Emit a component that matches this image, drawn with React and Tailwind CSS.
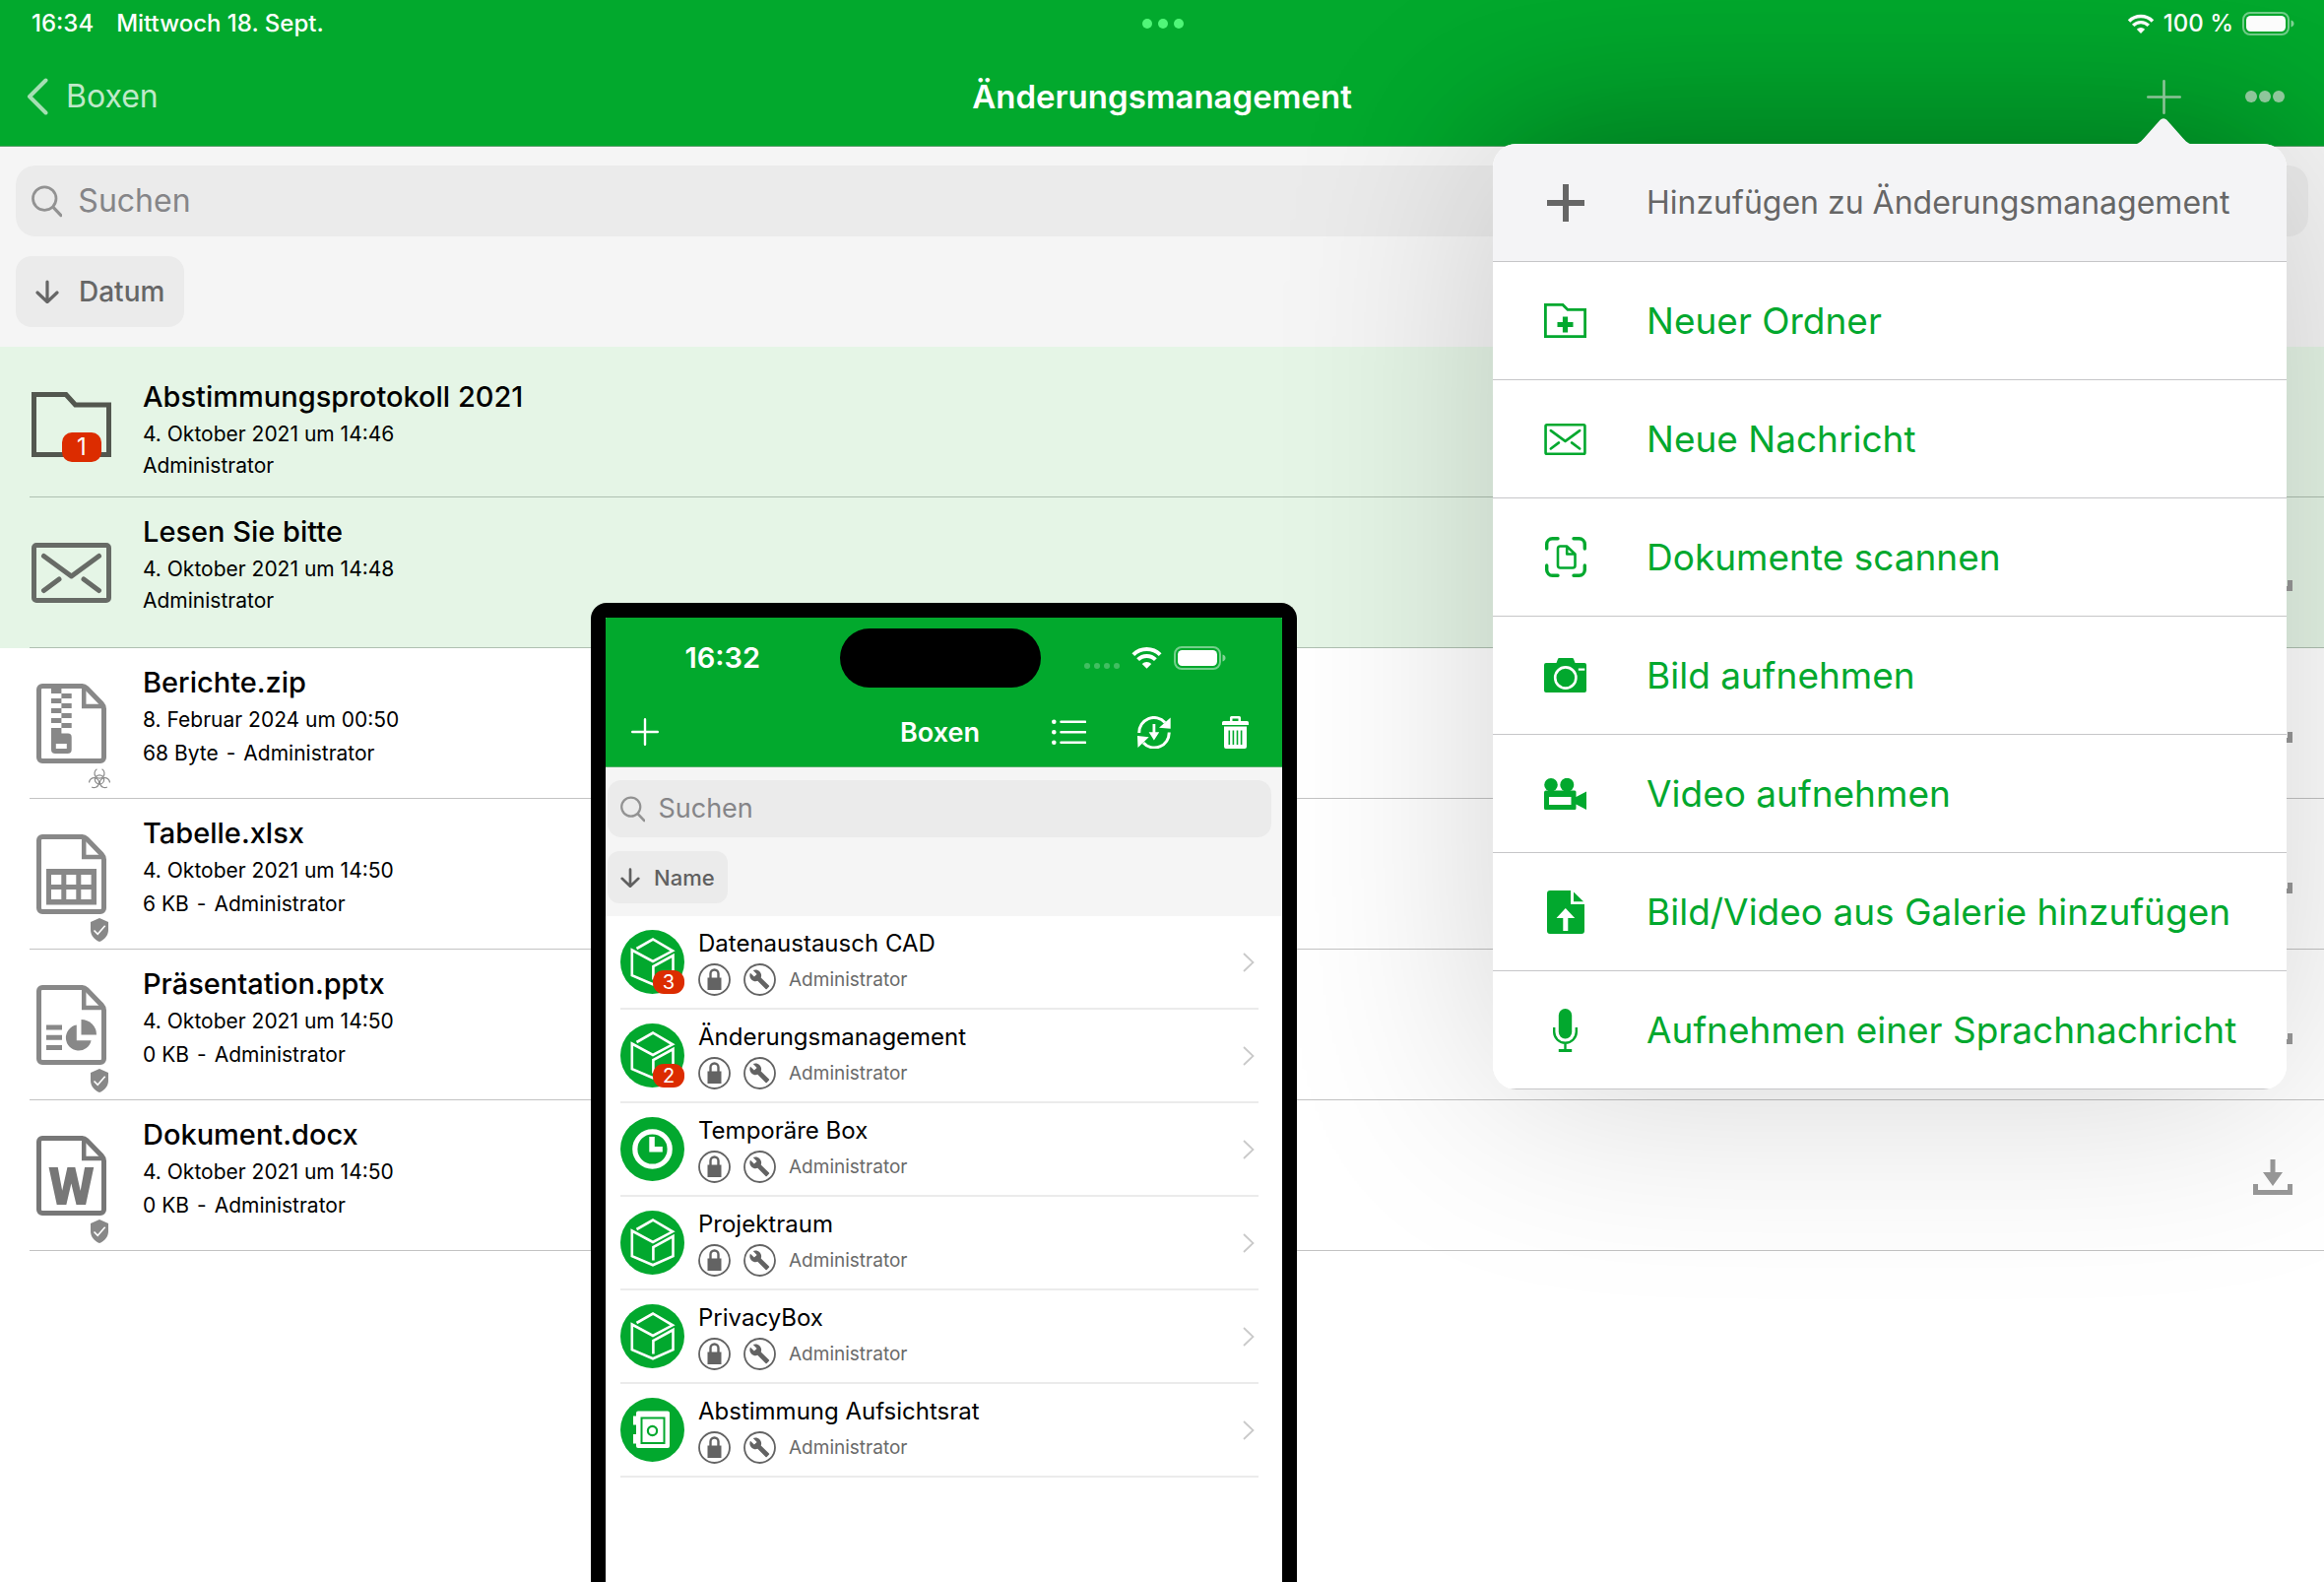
import React from "react";

/* ---------- status bar glyphs ---------- */

function Wifi({ className }) {
  return (
    <svg viewBox="0 0 30 22" className={className} fill="none" stroke="currentColor" strokeWidth="3.8" aria-hidden="true">
      <path d="M1.8 8.2A18.6 18.6 0 0 1 28.2 8.2" />
      <path d="M6.4 13.1A12 12 0 0 1 23.6 13.1" />
      <path d="M15 22L10.4 17.2A6.6 6.6 0 0 1 19.6 17.2Z" fill="currentColor" stroke="none" />
    </svg>
  );
}

function Battery({ className }) {
  return (
    <svg viewBox="0 0 53 24" className={className} aria-hidden="true">
      <rect x="1" y="1" width="46" height="22" rx="7" fill="none" stroke="currentColor" strokeOpacity="0.45" strokeWidth="2" />
      <rect x="4" y="4" width="40" height="16" rx="4.5" fill="currentColor" />
      <path d="M49.5 8.5c2 .6 3 1.9 3 3.5s-1 2.9-3 3.5z" fill="currentColor" fillOpacity="0.5" />
    </svg>
  );
}

/* ---------- shared glyphs ---------- */

function SearchGlyph({ className }) {
  return (
    <svg viewBox="0 0 32 33" className={className} fill="none" stroke="#929292" strokeWidth="2.8" strokeLinecap="round" aria-hidden="true">
      <circle cx="13.5" cy="13.5" r="12" />
      <path d="M22.5 22.5l8 8.5" strokeWidth="3.2" />
    </svg>
  );
}

function ArrowDown({ className }) {
  return (
    <svg viewBox="0 0 24 24" className={className} fill="none" stroke="currentColor" strokeWidth="3.2" strokeLinecap="round" strokeLinejoin="round" aria-hidden="true">
      <path d="M12 2v20M2 13l10 9.5L22 13" />
    </svg>
  );
}

function DownloadGlyph() {
  return (
    <svg viewBox="0 0 40 36" className="h-9 w-10" fill="#999999" aria-hidden="true">
      <path d="M17.5 0h5v13H30L20 27 10 13h7.5z" />
      <path d="M0 25h5v6h30v-6h5v11H0z" />
    </svg>
  );
}

function Envelope({ className, stroke, edge = 5 }) {
  return (
    <svg viewBox="0 0 81 61" className={className} fill="none" stroke={stroke} strokeWidth={edge} strokeLinecap="round" aria-hidden="true">
      <rect x="2.5" y="2.5" width="76" height="56" rx="2.5" />
      <path d="M12.5 13.5l28 20.5 28-20.5M12.5 48.5l15.5-11.5M68.5 48.5L53 37" strokeLinejoin="round" />
    </svg>
  );
}

/* ---------- file list glyphs ---------- */

function FolderIcon() {
  return (
    <div className="relative mt-3.5 ml-0.5 h-[66px] w-[81px]">
      <svg viewBox="0 0 81 66" className="h-[66px] w-[81px]" fill="none" stroke="#53574f" strokeWidth="5" aria-hidden="true">
        <path d="M2.5 2.5h32.5l9.5 10.5h34v50.5h-76z" />
      </svg>
      <span className="absolute -bottom-[5px] left-[31px] flex h-[30px] w-10 items-center justify-center rounded-[10px] bg-[#dc2c00] text-[24px] leading-none text-white">
        1
      </span>
    </div>
  );
}

function Sheet({ color, children }) {
  return (
    <svg viewBox="0 0 71 81" className="mt-5 ml-[7px] h-[81px] w-[71px] overflow-visible" aria-hidden="true">
      <path
        d="M6 2.5h40.5c2 0 3 .6 4.5 2L66 20c1.8 2 2.5 3.5 2.5 5.5V75a3.5 3.5 0 0 1-3.5 3.5H6A3.5 3.5 0 0 1 2.5 75V6A3.5 3.5 0 0 1 6 2.5z"
        fill="none"
        stroke={color}
        strokeWidth="5"
      />
      <path d="M48.2 3v20H69" fill="none" stroke={color} strokeWidth="4.5" />
      {children(color)}
    </svg>
  );
}

function ZipIcon() {
  return (
    <Sheet color="#888888">
      {(c) => (
        <g fill={c}>
          <path d="M15 2h10.4v8H15zM15 15h10.4v5H15zM15 25h10.4v5H15zM15 35h10.4v5H15zM25.4 10h10.3v5H25.4zM25.4 20h10.3v5H25.4zM25.4 30h10.3v5H25.4zM25.4 40h10.3v5H25.4z" />
          <path fillRule="evenodd" d="M15 45h10.4v5.5H32a3.7 3.7 0 0 1 3.7 3.7V67a4 4 0 0 1-4 4H19a4 4 0 0 1-4-4zM19.8 61v5h11v-5z" />
        </g>
      )}
    </Sheet>
  );
}

function TableIcon() {
  return (
    <Sheet color="#888888">
      {(c) => (
        <path
          fill={c}
          fillRule="evenodd"
          d="M10 35h51v36.5H10zM15 41v10h10.3V41zM30.3 41v10h10V41zM45.3 41v10h10.3V41zM15 56v10h10.3V56zM30.3 56v10h10V56zM45.3 56v10h10.3V56z"
        />
      )}
    </Sheet>
  );
}

function SlidesIcon() {
  return (
    <Sheet color="#888888">
      {(c) => (
        <g fill={c}>
          <path d="M10 40.5h16v5H10zM10 50.7h16v5H10zM10 61h16v5H10z" />
          <path d="M40.8 40.6A13 13 0 1 0 55.6 56.2H40.8z" />
          <path d="M45.5 35A15.5 15.5 0 0 1 61 50.6H45.5z" />
        </g>
      )}
    </Sheet>
  );
}

function WordIcon() {
  return (
    <Sheet color="#777777">
      {(c) => (
        <text x="35.5" y="70" textAnchor="middle" fill={c} className="font-[Roboto,sans-serif] text-[54px] font-black">
          W
        </text>
      )}
    </Sheet>
  );
}

function Shield() {
  return (
    <svg viewBox="0 0 18 24" className="mt-1 h-6 w-[18px] self-end" aria-hidden="true">
      <path d="M9 0l9 4v8c0 5.5-3.8 10-9 12-5.2-2-9-6.5-9-12V4z" fill="#888888" />
      <path d="M3.5 12.5l3.7 3.8 7.5-8.5" fill="none" stroke="#fff" strokeWidth="1.6" />
    </svg>
  );
}

function Biohazard() {
  return (
    <svg viewBox="0 0 22 22" className="mt-1 -mr-0.5 size-[22px] self-end" fill="none" stroke="#8a8a8a" strokeWidth="1.2" aria-hidden="true">
      <path d="M8.4 1.8A5 5 0 1 0 13.6 1.8" />
      <path d="M8.4 1.8A5 5 0 1 0 13.6 1.8" transform="rotate(120 11 12.4)" />
      <path d="M8.4 1.8A5 5 0 1 0 13.6 1.8" transform="rotate(240 11 12.4)" />
      <circle cx="11" cy="12.4" r="4.6" />
    </svg>
  );
}

const files = [
  { name: "Lesen Sie bitte", date: "4. Oktober 2021 um 14:48", owner: "Administrator", icon: <Envelope className="mt-[30px] ml-0.5 h-[61px] w-[81px]" stroke="#676b66" />, unread: true },
  { name: "Berichte.zip", date: "8. Februar 2024 um 00:50", size: "68 Byte", owner: "Administrator", icon: <ZipIcon />, state: <Biohazard /> },
  { name: "Tabelle.xlsx", date: "4. Oktober 2021 um 14:50", size: "6 KB", owner: "Administrator", icon: <TableIcon />, state: <Shield /> },
  { name: "Präsentation.pptx", date: "4. Oktober 2021 um 14:50", size: "0 KB", owner: "Administrator", icon: <SlidesIcon />, state: <Shield /> },
  { name: "Dokument.docx", date: "4. Oktober 2021 um 14:50", size: "0 KB", owner: "Administrator", icon: <WordIcon />, state: <Shield /> },
];

function FileText({ name, date, size, owner }) {
  return (
    <div className="flex-1">
      <h2 className="text-[29px] leading-[38px] font-medium">{name}</h2>
      <div className={size ? "mt-[3px] flex flex-col gap-0.5" : "mt-[3px] flex flex-col"}>
        <p className="text-[21px] leading-8">{date}</p>
        <p className="flex gap-2 text-[21px] leading-8">
          {size && (
            <>
              <span>{size}</span>
              <span>-</span>
            </>
          )}
          <span>{owner}</span>
        </p>
      </div>
    </div>
  );
}

function FileList() {
  return (
    <ul>
      <li className="bg-[#e5f5e6] pl-[30px]">
        <div className="flex border-b border-[#afc0b1] pt-8 pb-[15px]">
          <div className="w-[115px]">
            <FolderIcon />
          </div>
          <FileText name="Abstimmungsprotokoll 2021" date="4. Oktober 2021 um 14:46" owner="Administrator" />
        </div>
      </li>
      {files.map((f) => (
        <li key={f.name} className={f.unread ? "bg-[#e5f5e6] pl-[30px]" : "pl-[30px]"}>
          <div className={f.unread ? "flex border-b border-[#afc0b1] pt-4 pb-[31px]" : "flex border-b border-[#c3c3c3] pt-4 pb-[29px]"}>
            <div className="h-0 w-[115px]">
              <div className="flex w-20 flex-col">
                {f.icon}
                {f.state}
              </div>
            </div>
            <FileText name={f.name} date={f.date} size={f.size} owner={f.owner} />
            <button type="button" aria-label={`${f.name} herunterladen`} className="mt-4 mr-8 self-center">
              <DownloadGlyph />
            </button>
          </div>
        </li>
      ))}
    </ul>
  );
}

/* ---------- popover ---------- */

const menu = [
  {
    label: "Neuer Ordner",
    icon: (
      <svg viewBox="0 0 43 35" className="h-[35px] w-[43px]" fill="none" stroke="currentColor" strokeWidth="2.8" aria-hidden="true">
        <path d="M1.4 1.4h17.6l5 5h17.6v27.2H1.4z" />
        <path d="M21.5 13.5v16M13.5 21.5h16" strokeWidth="5.2" />
      </svg>
    ),
  },
  { label: "Neue Nachricht", icon: <Envelope className="h-8 w-[43px]" stroke="currentColor" edge={5} /> },
  {
    label: "Dokumente scannen",
    icon: (
      <svg viewBox="0 0 42 41" className="h-[41px] w-[42px]" fill="none" stroke="currentColor" strokeWidth="3.4" strokeLinecap="round" strokeLinejoin="round" aria-hidden="true">
        <path d="M1.7 12V7.5a5.8 5.8 0 0 1 5.8-5.8H13M29 1.7h5.5a5.8 5.8 0 0 1 5.8 5.8V12M40.3 29v4.5a5.8 5.8 0 0 1-5.8 5.8H29M13 39.3H7.5a5.8 5.8 0 0 1-5.8-5.8V29" />
        <path d="M22 9.5h-6.5a2.5 2.5 0 0 0-2.5 2.5v17a2.5 2.5 0 0 0 2.5 2.5h12.5a2.5 2.5 0 0 0 2.5-2.5V17.5zM22.2 10v7.5h8" strokeWidth="2.6" />
      </svg>
    ),
  },
  {
    label: "Bild aufnehmen",
    icon: (
      <svg viewBox="0 0 43 35" className="h-[35px] w-[43px]" fill="currentColor" aria-hidden="true">
        <path d="M2 5h10.5l1.5-4a1.5 1.5 0 0 1 1.5-1h13a1.5 1.5 0 0 1 1.5 1l1.5 4H41a2 2 0 0 1 2 2v26a2 2 0 0 1-2 2H2a2 2 0 0 1-2-2V7a2 2 0 0 1 2-2z" />
        <circle cx="21.8" cy="20" r="10.6" stroke="#fff" strokeWidth="2.6" />
        <path d="M34.8 10.5h6.5v2.2h-6.5z" fill="#fff" />
      </svg>
    ),
  },
  {
    label: "Video aufnehmen",
    icon: (
      <svg viewBox="0 0 43 32" className="h-8 w-[43px]" fill="currentColor" aria-hidden="true">
        <circle cx="7" cy="6.8" r="6.8" />
        <circle cx="23.3" cy="6.8" r="7" />
        <path fillRule="evenodd" d="M2 12.5h29a1.5 1.5 0 0 1 1.5 1.5v5L43 13.5V32l-10.5-5.5V30.5A1.5 1.5 0 0 1 31 32H1.5A1.5 1.5 0 0 1 0 30.5V14.5a2 2 0 0 1 2-2zM5 19v8h22.5v-8z" />
      </svg>
    ),
  },
  {
    label: "Bild/Video aus Galerie hinzufügen",
    icon: (
      <svg viewBox="0 0 38 44" className="h-11 w-[38px]" fill="currentColor" aria-hidden="true">
        <path d="M3 0h21v14h14v27a3 3 0 0 1-3 3H3a3 3 0 0 1-3-3V3a3 3 0 0 1 3-3z" />
        <path d="M27 1.5l10 9.7H27z" />
        <path d="M18.8 18l9.4 10h-6.9v13h-5V28H9.5z" fill="#fff" />
      </svg>
    ),
  },
  {
    label: "Aufnehmen einer Sprachnachricht",
    icon: (
      <svg viewBox="0 0 25 44" className="h-11 w-[25px]" fill="none" stroke="currentColor" strokeWidth="2.4" aria-hidden="true">
        <rect x="5.8" y="0" width="13.4" height="30.5" rx="6.7" fill="currentColor" stroke="none" />
        <path d="M1.2 19v4.5a11.3 11.3 0 0 0 22.6 0V19M12.5 34.5V42" />
        <path d="M5.8 42.5h13.4" strokeWidth="3" />
      </svg>
    ),
  },
];

function Popover() {
  return (
    <div role="menu" aria-label="Hinzufügen" className="absolute top-[146px] right-[38px] z-10 w-[806px] rounded-3xl shadow-[0_0_220px_rgba(0,0,0,0.18)]">
      <svg viewBox="0 0 68 27" className="absolute -top-[26px] right-[91px] h-[27px] w-[68px]" fill="#f4f4f6" aria-hidden="true">
        <path d="M0 27c7 0 10-2 14-6.5L29.5 3c3-3.7 6-3.7 9 0L54 20.5C58 25 61 27 68 27z" />
      </svg>
      <div className="overflow-hidden rounded-3xl bg-white">
        <div className="flex h-[120px] items-center border-b border-[#c6c6c8] bg-[#f4f4f6] pl-[52px]">
          <span className="flex w-[43px] justify-center">
            <svg viewBox="0 0 38 38" className="size-[38px]" stroke="#666666" strokeWidth="6" aria-hidden="true">
              <path d="M19 0v38M0 19h38" />
            </svg>
          </span>
          <span className="ml-[61px] text-[32px] leading-none whitespace-nowrap text-[#666666]">Hinzufügen zu Änderungsmanagement</span>
        </div>
        {menu.map((m) => (
          <button key={m.label} type="button" role="menuitem" className="flex h-[120px] w-full items-center border-b border-[#c6c6c8] pl-[52px] text-[#02a82e]">
            <span className="flex w-[43px] justify-center">{m.icon}</span>
            <span className="ml-[61px] text-[37px] leading-none whitespace-nowrap">{m.label}</span>
          </button>
        ))}
      </div>
    </div>
  );
}

/* ---------- phone ---------- */

function CubeGlyph() {
  return (
    <path
      d="M16.5 19L33 9.5l20 11.8L33 32 11.8 20.5v25.7L33 55.3l20.5-9.1V26L33.4 37v13.5"
      fill="none"
      stroke="#fff"
      strokeWidth="2.6"
    />
  );
}

function ClockGlyph() {
  return (
    <g>
      <circle cx="32.5" cy="32.5" r="17.7" fill="none" stroke="#fff" strokeWidth="5.2" />
      <path d="M29.3 20h5.5v10h8v5.5H29.3z" fill="#fff" />
    </g>
  );
}

function SafeGlyph() {
  return (
    <g>
      <path d="M18 13.5h30a2 2 0 0 1 2 2V49a2 2 0 0 1-2 2H18a2 2 0 0 1-2-2v-2.5h-3V37h3V27.5h-3v-9h3v-3a2 2 0 0 1 2-2z" fill="#fff" />
      <path d="M21.5 20.5h23V46h-23z" fill="none" stroke="#02a82e" strokeWidth="2" />
      <circle cx="32.5" cy="33.5" r="4.6" fill="none" stroke="#02a82e" strokeWidth="2.2" />
    </g>
  );
}

function LockBadge() {
  return (
    <svg viewBox="0 0 33 33" className="size-[33px]" fill="none" stroke="#636363" aria-hidden="true">
      <circle cx="16.5" cy="16.5" r="15.5" strokeWidth="1.8" />
      <path d="M12.5 15.5v-5a4 4 0 0 1 8 0v5" strokeWidth="2.4" />
      <path d="M9.5 14.5h14v12.5h-14z" fill="#636363" stroke="none" />
    </svg>
  );
}

function WrenchBadge() {
  return (
    <svg viewBox="0 0 33 33" className="size-[33px]" aria-hidden="true">
      <circle cx="16.5" cy="16.5" r="15.5" strokeWidth="1.8" fill="none" stroke="#636363" />
      <g transform="translate(5.5 5.5) scale(0.9 0.9)">
        <path
          fill="#636363"
          d="M22.7 19l-9.1-9.1c.9-2.3.4-5-1.5-6.9-2-2-5-2.4-7.4-1.3L9 6 6 9 1.6 4.7C.4 7.1.9 10.1 2.9 12.1c1.9 1.9 4.6 2.4 6.9 1.5l9.1 9.1c.4.4 1 .4 1.4 0l2.3-2.3c.5-.4.5-1.1.1-1.4z"
        />
      </g>
    </svg>
  );
}

const boxes = [
  { name: "Datenaustausch CAD", glyph: <CubeGlyph />, count: 3 },
  { name: "Änderungsmanagement", glyph: <CubeGlyph />, count: 2 },
  { name: "Temporäre Box", glyph: <ClockGlyph /> },
  { name: "Projektraum", glyph: <CubeGlyph /> },
  { name: "PrivacyBox", glyph: <CubeGlyph /> },
  { name: "Abstimmung Aufsichtsrat", glyph: <SafeGlyph /> },
];

function BoxRow({ name, glyph, count }) {
  return (
    <li className="flex items-center border-b-2 border-[#ebebeb] py-3">
      <div className="relative">
        <svg viewBox="0 0 65 65" className="size-[65px]" aria-hidden="true">
          <circle cx="32.5" cy="32.5" r="32.5" fill="#02a82e" />
          {glyph}
        </svg>
        {count && (
          <span className="absolute right-0 bottom-0 flex h-6 w-8 items-center justify-center rounded-[11px] bg-[#dc2c00] text-[20px] leading-none text-white">
            {count}
          </span>
        )}
      </div>
      <div className="ml-3.5 flex-1">
        <h3 className="text-[24px] leading-8">{name}</h3>
        <div className="mt-1 flex items-center gap-[13px]">
          <LockBadge />
          <WrenchBadge />
          <span className="text-[19px] leading-6 text-[#6a6a6a]">Administrator</span>
        </div>
      </div>
      <svg viewBox="0 0 12 20" className="mr-1 h-5 w-3" fill="none" stroke="#c9c9c9" strokeWidth="1.8" aria-hidden="true">
        <path d="M1 1l9.5 9L1 19" />
      </svg>
    </li>
  );
}

function Phone() {
  return (
    <section aria-label="Boxen" className="absolute top-[612px] bottom-0 left-[600px] z-20 w-[717px] overflow-hidden rounded-t-2xl border-x-[15px] border-t-[15px] border-black bg-white">
      <header className="border-b border-[#4fae66] bg-[#02a92d] pr-2 text-white">
        <div className="grid h-[81px] grid-cols-[1fr_204px_1fr] items-center">
          <span className="text-center text-[29px] leading-none font-semibold">16:32</span>
          <span className="h-[60px] rounded-full bg-black" />
          <span className="flex items-center justify-center pr-1">
            <span className="mt-4 flex gap-1">
              <i className="size-1.5 rounded-sm bg-white/25" />
              <i className="size-1.5 rounded-sm bg-white/25" />
              <i className="size-1.5 rounded-sm bg-white/25" />
              <i className="size-1.5 rounded-sm bg-white/25" />
            </span>
            <Wifi className="ml-3 h-[23px] w-[31px]" />
            <Battery className="ml-3 h-6 w-[53px]" />
          </span>
        </div>
        <div className="grid h-[70px] grid-cols-[1fr_auto_1fr] items-center px-[26px]">
          <button type="button" aria-label="Neue Box" className="justify-self-start">
            <svg viewBox="0 0 28 28" className="size-7" stroke="currentColor" strokeWidth="2.4" strokeLinecap="round" aria-hidden="true">
              <path d="M14 1.2v25.6M1.2 14h25.6" />
            </svg>
          </button>
          <h2 className="text-[27px] leading-none font-semibold">Boxen</h2>
          <div className="flex items-center justify-end gap-[52px]">
            <button type="button" aria-label="Liste">
              <svg viewBox="0 0 35 27" className="h-[27px] w-[35px]" stroke="currentColor" strokeWidth="2.6" strokeLinecap="round" aria-hidden="true">
                <path d="M9.5 2.7H34M9.5 13.2H34M9.5 23.8H34" />
                <path d="M2.3 2.7h.01M2.3 13.2h.01M2.3 23.8h.01" strokeWidth="4.6" />
              </svg>
            </button>
            <button type="button" aria-label="Synchronisieren">
              <svg viewBox="0 0 34 33" className="h-[33px] w-[34px]" fill="currentColor" aria-hidden="true">
                <path d="M1.8 17A15 15 0 0 1 28 6.5M32.2 16.5A15 15 0 0 1 6 27" fill="none" stroke="currentColor" strokeWidth="3" />
                <path d="M33.7 1.5v11.2L22 11.7zM0 20l11.7 1.3L.5 32z" />
                <path d="M15.5 8h2.8v8.3h3.9l-5.3 8.2-5.3-8.2h3.9z" />
              </svg>
            </button>
            <button type="button" aria-label="Löschen">
              <svg viewBox="0 0 27 33" className="h-[33px] w-[27px]" fill="currentColor" aria-hidden="true">
                <path fillRule="evenodd" d="M8 5V1.5A1.5 1.5 0 0 1 9.5 0h8A1.5 1.5 0 0 1 19 1.5V5h6.5A1.5 1.5 0 0 1 27 6.5V9H0V6.5A1.5 1.5 0 0 1 1.5 5zM10.5 2.5V5h6V2.5z" />
                <path fillRule="evenodd" d="M2 10.5h23V31a2 2 0 0 1-2 2H4a2 2 0 0 1-2-2zM6.5 14.5v14.5h1.6V14.5zM10.6 14.5v14.5h1.6V14.5zM14.7 14.5v14.5h1.6V14.5zM18.8 14.5v14.5h1.6V14.5z" />
              </svg>
            </button>
          </div>
        </div>
      </header>
      <div className="bg-[#f5f5f5] pt-[13px] pr-[11px] pb-[13px] pl-0.5">
        <label className="flex h-[58px] items-center gap-[13px] rounded-[14px] bg-[#ebebeb] pl-[13px]">
          <SearchGlyph className="h-[27px] w-[27px]" />
          <input type="search" placeholder="Suchen" aria-label="Boxen durchsuchen" className="w-full bg-transparent text-[27px] outline-none placeholder:text-[#858588]" />
        </label>
        <button type="button" className="mt-3.5 flex h-[53px] items-center gap-3.5 rounded-xl bg-[#ebebeb] px-[13px] text-[#606060]">
          <ArrowDown className="size-5" />
          <span className="text-[22px] leading-none font-medium">Name</span>
        </button>
      </div>
      <ul className="pr-6 pl-[15px]">
        {boxes.map((b) => (
          <BoxRow key={b.name} {...b} />
        ))}
      </ul>
    </section>
  );
}

/* ---------- tablet ---------- */

function TabletHeader() {
  return (
    <header className="relative border-b border-[#5b9d6b] bg-[#02a92d] text-white">
      <div className="absolute inset-0 overflow-hidden">
        <div className="absolute top-[146px] right-[38px] h-[960px] w-[806px] rounded-3xl shadow-[0_0_150px_rgba(0,0,0,0.24)]" />
      </div>
      <div className="relative grid h-12 grid-cols-[1fr_auto_1fr] items-center pr-[30px] pl-8 text-[24px] leading-none font-medium">
        <div className="flex gap-[23px]">
          <span>16:34</span>
          <span>Mittwoch 18. Sept.</span>
        </div>
        <div className="flex gap-1.5">
          <i className="size-2.5 rounded-full bg-[#50f678]" />
          <i className="size-2.5 rounded-full bg-[#50f678]" />
          <i className="size-2.5 rounded-full bg-[#50f678]" />
        </div>
        <div className="flex items-center justify-end gap-[9px]">
          <Wifi className="h-5 w-7" />
          <span>100 %</span>
          <Battery className="h-6 w-[53px]" />
        </div>
      </div>
      <div className="relative grid h-[100px] grid-cols-[1fr_auto_1fr] items-center px-[27px]">
        <a href="#boxen" className="flex items-center gap-[18px] text-[#bfe9c9]">
          <svg viewBox="0 0 22 38" className="h-[38px] w-[22px]" fill="none" stroke="#a5dfb3" strokeWidth="4" strokeLinecap="round" strokeLinejoin="round" aria-hidden="true">
            <path d="M19.5 2.5L3 19l16.5 16.5" />
          </svg>
          <span className="text-[32px] leading-none">Boxen</span>
        </a>
        <h1 className="text-[33px] leading-none font-semibold">Änderungsmanagement</h1>
        <div className="mr-[13px] flex items-center justify-end gap-[65px] text-[#94cda0]">
          <button type="button" aria-label="Hinzufügen" aria-expanded="true">
            <svg viewBox="0 0 35 35" className="size-[35px]" stroke="currentColor" strokeWidth="2.6" strokeLinecap="round" aria-hidden="true">
              <path d="M17.5 1.3v32.4M1.3 17.5h32.4" />
            </svg>
          </button>
          <button type="button" aria-label="Mehr" className="flex gap-0.5">
            <i className="size-3 rounded-full bg-current" />
            <i className="size-3 rounded-full bg-current" />
            <i className="size-3 rounded-full bg-current" />
          </button>
        </div>
      </div>
    </header>
  );
}

export default function App() {
  return (
    <div className="relative min-h-screen overflow-hidden bg-white font-[Inter,'Liberation_Sans',sans-serif] text-black">
      <TabletHeader />
      <div className="bg-[#f5f5f5] px-4 pt-[19px] pb-5">
        <label className="flex h-[72px] items-center gap-4 rounded-[20px] bg-[#ebebeb] pl-4">
          <SearchGlyph className="h-[33px] w-8" />
          <input type="search" placeholder="Suchen" aria-label="Dateien durchsuchen" className="w-full bg-transparent text-[32px] outline-none placeholder:text-[#858588]" />
        </label>
        <button type="button" className="mt-5 flex h-[72px] items-center gap-5 rounded-2xl bg-[#ebebeb] px-5 text-[#666666]">
          <ArrowDown className="size-6" />
          <span className="text-[28px] leading-none font-medium">Datum</span>
        </button>
      </div>
      <FileList />
      <Popover />
      <Phone />
    </div>
  );
}
